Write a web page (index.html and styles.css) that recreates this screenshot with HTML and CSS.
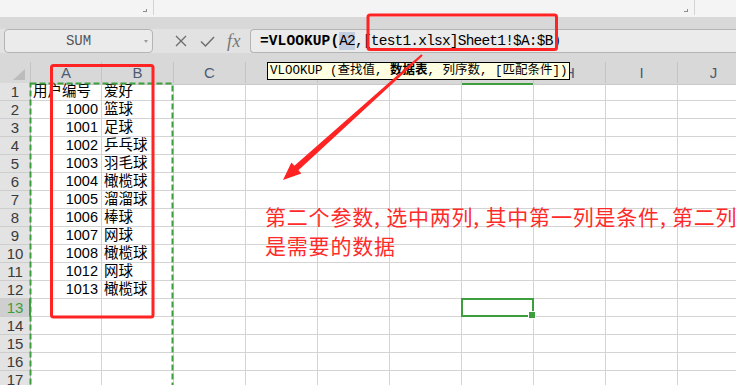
FILE: index.html
```html
<!DOCTYPE html>
<html lang="zh">
<head>
<meta charset="utf-8">
<title>VLOOKUP</title>
<link rel="stylesheet" href="styles.css">
</head>
<body>
<div class="app">
  <div class="ribbon">
    <div class="rb-group g1"><span class="launcher"></span></div>
    <div class="rb-group g2"><span class="launcher"></span></div>
    <div class="rb-group g3"></div>
  </div>
  <div class="strip"></div>
  <div class="fbar">
    <div class="namebox"><span class="nb-text">SUM</span><span class="dd"></span></div>
    <div class="fbtns">
      <svg class="ic-x" width="12" height="12" viewBox="0 0 12 12"><path d="M1 1L11 11M11 1L1 11" stroke="#6b6b6b" stroke-width="1.3" fill="none"/></svg>
      <svg class="ic-ok" width="15" height="11" viewBox="0 0 15 11"><path d="M1 5.5L5.5 10L14 1" stroke="#6b6b6b" stroke-width="1.4" fill="none"/></svg>
      <span class="fx">fx</span>
    </div>
    <div class="fbox"><b class="fn">=VLOOKUP(</b><span class="ref">A2</span><span class="rest">,[test1.xlsx]Sheet1!$A:$B)</span></div>
  </div>
  <div class="strip2"></div>
  <div class="sheet">
    <div class="row head">
      <div class="corner"><span class="tri"></span></div>
      <div class="ch">A</div><div class="ch">B</div><div class="ch">C</div><div class="ch">D</div><div class="ch">E</div><div class="ch">F</div><div class="ch sel-col">G</div><div class="ch">H</div><div class="ch">I</div><div class="ch">J</div>
    </div>
    <div class="row"><div class="rh">1</div><div class="c">用户编号</div><div class="c">爱好</div><div class="c"></div><div class="c"></div><div class="c"></div><div class="c"></div><div class="c"></div><div class="c"></div><div class="c"></div><div class="c"></div></div>
    <div class="row"><div class="rh">2</div><div class="c n">1000</div><div class="c">篮球</div><div class="c"></div><div class="c"></div><div class="c"></div><div class="c"></div><div class="c"></div><div class="c"></div><div class="c"></div><div class="c"></div></div>
    <div class="row"><div class="rh">3</div><div class="c n">1001</div><div class="c">足球</div><div class="c"></div><div class="c"></div><div class="c"></div><div class="c"></div><div class="c"></div><div class="c"></div><div class="c"></div><div class="c"></div></div>
    <div class="row"><div class="rh">4</div><div class="c n">1002</div><div class="c">乒乓球</div><div class="c"></div><div class="c"></div><div class="c"></div><div class="c"></div><div class="c"></div><div class="c"></div><div class="c"></div><div class="c"></div></div>
    <div class="row"><div class="rh">5</div><div class="c n">1003</div><div class="c">羽毛球</div><div class="c"></div><div class="c"></div><div class="c"></div><div class="c"></div><div class="c"></div><div class="c"></div><div class="c"></div><div class="c"></div></div>
    <div class="row"><div class="rh">6</div><div class="c n">1004</div><div class="c">橄榄球</div><div class="c"></div><div class="c"></div><div class="c"></div><div class="c"></div><div class="c"></div><div class="c"></div><div class="c"></div><div class="c"></div></div>
    <div class="row"><div class="rh">7</div><div class="c n">1005</div><div class="c">溜溜球</div><div class="c"></div><div class="c"></div><div class="c"></div><div class="c"></div><div class="c"></div><div class="c"></div><div class="c"></div><div class="c"></div></div>
    <div class="row"><div class="rh">8</div><div class="c n">1006</div><div class="c">棒球</div><div class="c"></div><div class="c"></div><div class="c"></div><div class="c"></div><div class="c"></div><div class="c"></div><div class="c"></div><div class="c"></div></div>
    <div class="row"><div class="rh">9</div><div class="c n">1007</div><div class="c">网球</div><div class="c"></div><div class="c"></div><div class="c"></div><div class="c"></div><div class="c"></div><div class="c"></div><div class="c"></div><div class="c"></div></div>
    <div class="row"><div class="rh">10</div><div class="c n">1008</div><div class="c">橄榄球</div><div class="c"></div><div class="c"></div><div class="c"></div><div class="c"></div><div class="c"></div><div class="c"></div><div class="c"></div><div class="c"></div></div>
    <div class="row"><div class="rh">11</div><div class="c n">1012</div><div class="c">网球</div><div class="c"></div><div class="c"></div><div class="c"></div><div class="c"></div><div class="c"></div><div class="c"></div><div class="c"></div><div class="c"></div></div>
    <div class="row"><div class="rh">12</div><div class="c n">1013</div><div class="c">橄榄球</div><div class="c"></div><div class="c"></div><div class="c"></div><div class="c"></div><div class="c"></div><div class="c"></div><div class="c"></div><div class="c"></div></div>
    <div class="row"><div class="rh sel-row">13</div><div class="c"></div><div class="c"></div><div class="c"></div><div class="c"></div><div class="c"></div><div class="c"></div><div class="c active"></div><div class="c"></div><div class="c"></div><div class="c"></div></div>
    <div class="row"><div class="rh">14</div><div class="c"></div><div class="c"></div><div class="c"></div><div class="c"></div><div class="c"></div><div class="c"></div><div class="c"></div><div class="c"></div><div class="c"></div><div class="c"></div></div>
    <div class="row"><div class="rh">15</div><div class="c"></div><div class="c"></div><div class="c"></div><div class="c"></div><div class="c"></div><div class="c"></div><div class="c"></div><div class="c"></div><div class="c"></div><div class="c"></div></div>
    <div class="row"><div class="rh">16</div><div class="c"></div><div class="c"></div><div class="c"></div><div class="c"></div><div class="c"></div><div class="c"></div><div class="c"></div><div class="c"></div><div class="c"></div><div class="c"></div></div>
    <div class="row"><div class="rh">17</div><div class="c"></div><div class="c"></div><div class="c"></div><div class="c"></div><div class="c"></div><div class="c"></div><div class="c"></div><div class="c"></div><div class="c"></div><div class="c"></div></div>
  </div>

  <div class="tooltip">VLOOKUP (查找值, <b>数据表</b>, 列序数, [匹配条件])</div>

  <div class="note">第二个参数, 选中两列, 其中第一列是条件, 第二列<br>是需要的数据</div>

  <svg class="overlay" width="736" height="385" viewBox="0 0 736 385">
    <rect x="30.5" y="83.5" width="142" height="400" fill="none" stroke="#3c9e3c" stroke-width="2" stroke-dasharray="6 3"/>
    <rect x="368" y="15" width="188.5" height="34.5" rx="2" fill="none" stroke="#ff2323" stroke-width="3"/>
    <rect x="51.5" y="65.5" width="101.5" height="251.5" rx="2" fill="none" stroke="#ff2323" stroke-width="3"/>
    <polygon points="422.7,55.7 298.4,170.2 301.4,173.6 283,180 291.4,162.4 294.4,165.8 421.3,54.3" fill="#ff2323"/>
  </svg>
</div>
</body>
</html>
```

FILE: styles.css
```css
* { box-sizing: border-box; }
body {
  margin: 0;
  width: 736px;
  height: 385px;
  overflow: hidden;
  background: #fff;
  font-family: "Liberation Sans", "Noto Sans CJK SC", sans-serif;
}
.app {
  position: relative;
  width: 736px;
  height: 385px;
  overflow: hidden;
}

/* ribbon remnant */
.ribbon {
  display: flex;
  height: 17px;
  background: #f4f4f4;
}
.rb-group {
  height: 15px;
  border-right: 1px solid #d3d3d3;
  display: flex;
  justify-content: flex-end;
  align-items: flex-end;
  padding: 0 6px 3px 0;
}
.g1 { width: 154px; }
.g2 { width: 541px; }
.g3 { flex: 1; border-right: none; }
.launcher {
  width: 4px;
  height: 3px;
  border-right: 1px solid #8c8c8c;
  border-bottom: 1px solid #8c8c8c;
}
.strip { height: 12px; background: #d8d8d8; }
.strip2 { height: 9px; background: #d8d8d8; }

/* formula bar */
.fbar {
  height: 24px;
  display: flex;
  background: #e2e2e2;
}
.namebox {
  margin-left: 4px;
  width: 149px;
  height: 24px;
  border: 1px solid #b4b4b4;
  border-radius: 4px;
  background: #ebebeb;
  display: flex;
  align-items: center;
  padding: 0 4px 0 8px;
}
.nb-text {
  flex: 1;
  text-align: center;
  font-family: "Liberation Mono", monospace;
  font-size: 14px;
  color: #555;
}
.dd {
  width: 0;
  height: 0;
  border-top: 3px solid #9a9a9a;
  border-left: 2.5px solid transparent;
  border-right: 2.5px solid transparent;
}
.fbtns {
  display: flex;
  align-items: center;
  padding-left: 22px;
  width: 97px;
}
.ic-x { margin-right: 13px; }
.ic-ok { margin-right: 12px; }
.fx {
  font-family: "Liberation Serif", serif;
  font-style: italic;
  font-size: 18px;
  color: #777;
  letter-spacing: 0.5px;
}
.fbox {
  flex: 1;
  height: 24px;
  border: 1px solid #b4b4b4;
  border-right: none;
  border-radius: 4px 0 0 4px;
  background: #ebebeb;
  display: flex;
  align-items: center;
  padding-left: 9px;
  font-family: "Liberation Mono", monospace;
  font-size: 14.5px;
  color: #000;
  white-space: nowrap;
}
.fn { font-weight: bold; letter-spacing: 0.1px; }
.ref {
  background: #c3cde0;
  letter-spacing: -0.8px;
  padding: 1px 0;
}
.rest { letter-spacing: -0.8px; }

/* sheet */
.sheet { font-size: 14.5px; }
.row {
  display: grid;
  grid-template-columns: 31px 71px repeat(9, 72px);
  height: 18px;
}
.row.head { height: 21px; }
.corner {
  background: #d8d8d8;
  border-right: 1px solid #c4c4c4;
  border-bottom: 1px solid #c4c4c4;
  display: flex;
  align-items: flex-end;
  justify-content: flex-end;
  padding: 0 5px 4px 0;
}
.tri {
  width: 0;
  height: 0;
  border-bottom: 11px solid #bcbcbc;
  border-left: 12px solid transparent;
}
.ch {
  background: #d8d8d8;
  border-right: 1px solid #c4c4c4;
  border-bottom: 1px solid #c9c9c9;
  text-align: center;
  line-height: 20px;
  color: #4e5b73;
  font-size: 15px;
  padding-top: 1px;
}
.ch.sel-col { border-bottom: 2px solid #3c9e3c; }
.rh {
  background: #e3e3e3;
  border-right: 1px solid #bdbdbd;
  border-bottom: 1px solid #cdcdcd;
  text-align: center;
  line-height: 17px;
  color: #3a3a3a;
  font-size: 15px;
}
.rh.sel-row {
  background: #cfcfcf;
  color: #3c9e3c;
  border-right: 2px solid #3c9e3c;
  padding-left: 1px;
}
.c {
  border-right: 1px solid #d4d4d4;
  border-bottom: 1px solid #d4d4d4;
  line-height: 17px;
  padding-left: 2px;
  white-space: nowrap;
  color: #000;
}
.c.n {
  text-align: right;
  padding-right: 3px;
}
.c.active { position: relative; }
.c.active::after {
  content: "";
  position: absolute;
  left: -1px;
  top: -1px;
  right: -1px;
  bottom: -1px;
  border: 2px solid #3c9e3c;
}
.c.active::before {
  content: "";
  position: absolute;
  right: -3px;
  bottom: -3px;
  width: 6px;
  height: 6px;
  background: #3c9e3c;
  border: 1px solid #fff;
  z-index: 2;
}

/* tooltip */
.tooltip {
  position: absolute;
  left: 267px;
  top: 62px;
  width: 303px;
  height: 18px;
  border: 1px solid #000;
  background: #ffffe1;
  font-family: "Liberation Mono", "Noto Sans CJK SC", monospace;
  font-size: 12.5px;
  line-height: 16px;
  padding-left: 2px;
  white-space: nowrap;
  overflow: hidden;
  color: #000;
}
.tooltip b { font-weight: bold; }

/* annotation */
.note {
  position: absolute;
  left: 265px;
  top: 202px;
  font-family: "Noto Sans CJK SC", sans-serif;
  font-size: 21px;
  line-height: 29px;
  letter-spacing: 0.8px;
  color: #ff2b2b;
  white-space: nowrap;
}
.overlay {
  position: absolute;
  left: 0;
  top: 0;
  pointer-events: none;
}
```
